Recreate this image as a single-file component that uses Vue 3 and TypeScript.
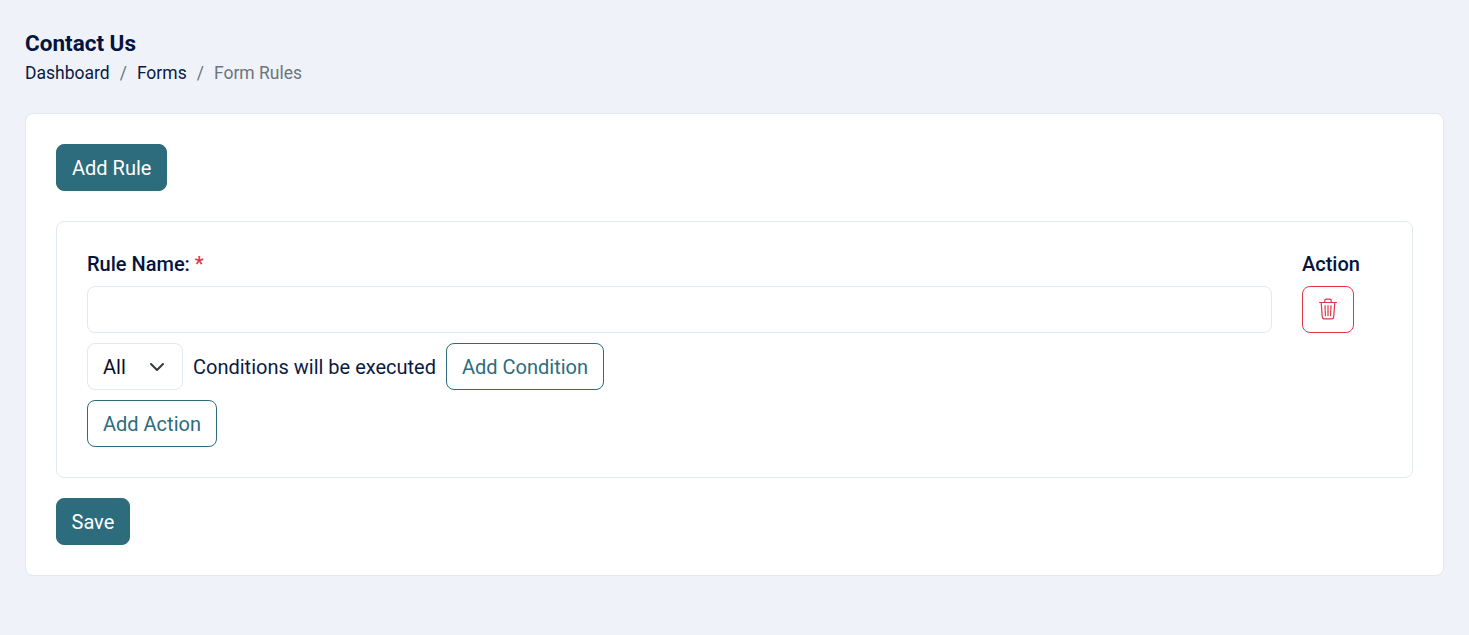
<script setup lang="ts">
const crumbs: string[] = ['Dashboard', 'Forms']
</script>

<template>
  <div class="page">
    <h1 class="title">Contact Us</h1>
    <nav class="crumbs">
      <template v-for="c in crumbs" :key="c">
        <a class="crumb">{{ c }}</a>
        <span class="sep">/</span>
      </template>
      <span class="current">Form Rules</span>
    </nav>
    <section class="card">
      <button class="btn solid">Add Rule</button>
      <div class="rule">
        <div class="top">
          <div class="name">
            <label class="label">Rule Name: <span class="req">*</span></label>
            <input class="input" type="text" />
          </div>
          <div class="action">
            <div class="label">Action</div>
            <button class="trash" aria-label="Delete">
              <svg width="20" height="22" viewBox="0 0 20 22" fill="none" stroke="#e0364c" stroke-width="1.2" stroke-linecap="round" stroke-linejoin="round">
                <path d="M1.5 4.5h17" />
                <path d="M6.8 4.3V2.6c0-.8.6-1.4 1.4-1.4h3.6c.8 0 1.4.6 1.4 1.4v1.7" />
                <path d="M3.2 4.7l1.1 14.4c.1 1 .8 1.7 1.8 1.7h7.8c1 0 1.7-.7 1.8-1.7l1.1-14.4" />
                <path d="M7 7.6l.4 10M10 7.6v10M13 7.6l-.4 10" />
              </svg>
            </button>
          </div>
        </div>
        <div class="cond">
          <div class="select">
            <span>All</span>
            <svg width="16" height="16" viewBox="0 0 16 16" fill="none" stroke="#343a40" stroke-width="2" stroke-linecap="round" stroke-linejoin="round"><path d="M2 5l6 6 6-6" /></svg>
          </div>
          <span class="text">Conditions will be executed</span>
          <button class="btn outline">Add Condition</button>
        </div>
        <button class="btn outline">Add Action</button>
      </div>
      <button class="btn solid save">Save</button>
    </section>
  </div>
</template>

<style>
html, body { margin: 0; background: #eff2f9; }
</style>

<style scoped>
.page {
  box-sizing: border-box;
  height: 635px;
  padding: 31px 25px 0;
  background: #eff2f9;
  font-family: Roboto, sans-serif;
  font-size: 17.5px;
  color: #0a1a44;
  overflow: hidden;
}
.title {
  margin: 0 0 7px;
  font-size: 22.5px;
  line-height: 24px;
  font-weight: 700;
  color: #04143e;
}
.crumbs {
  display: flex;
  gap: 10px;
  line-height: 22px;
  height: 22px;
  margin-bottom: 29px;
}
.sep, .current { color: #6c757d; }
.card {
  display: flex;
  flex-direction: column;
  align-items: flex-start;
  gap: 30px;
  padding: 30px;
  background: #fff;
  border: 1px solid #e2e8f0;
  border-radius: 8px;
}
.btn {
  box-sizing: border-box;
  height: 47px;
  padding: 0 15px;
  font: 400 20px/1 Roboto, sans-serif;
  border-radius: 8px;
  cursor: pointer;
}
.solid {
  background: #2d6c7c;
  border: 1px solid #2d6c7c;
  color: #fff;
}
.save { margin-top: -10px; padding: 0 14.5px; }
.outline {
  background: #fff;
  border: 1px solid #2d6c7c;
  color: #2d6c7c;
}
.rule {
  align-self: stretch;
  display: flex;
  flex-direction: column;
  align-items: flex-start;
  gap: 10px;
  padding: 30px;
  border: 1px solid #e2e8f0;
  border-radius: 8px;
}
.top {
  align-self: stretch;
  display: flex;
  gap: 30px;
}
.name { flex: 1; }
.action { width: 80px; }
.label {
  display: block;
  height: 24px;
  margin-bottom: 10px;
  font-size: 20px;
  line-height: 24px;
  font-weight: 500;
  color: #04143e;
}
.req { color: #e0364c; }
.input {
  display: block;
  box-sizing: border-box;
  width: 100%;
  height: 47px;
  background: #fff;
  border: 1px solid #e2e8f0;
  border-radius: 8px;
  outline: none;
}
.trash {
  display: flex;
  align-items: center;
  justify-content: center;
  box-sizing: border-box;
  width: 52px;
  height: 47px;
  padding: 0 0 2px;
  background: #fff;
  border: 1px solid #e0364c;
  border-radius: 8px;
}
.cond {
  display: flex;
  align-items: center;
  gap: 10px;
}
.select {
  box-sizing: border-box;
  display: flex;
  align-items: center;
  justify-content: space-between;
  width: 96px;
  height: 47px;
  padding: 0 17px 0 15px;
  border: 1px solid #e2e8f0;
  border-radius: 8px;
  font-size: 20px;
  color: #0a0f24;
}
.text { font-size: 20px; color: #0a1a44; }
</style>
